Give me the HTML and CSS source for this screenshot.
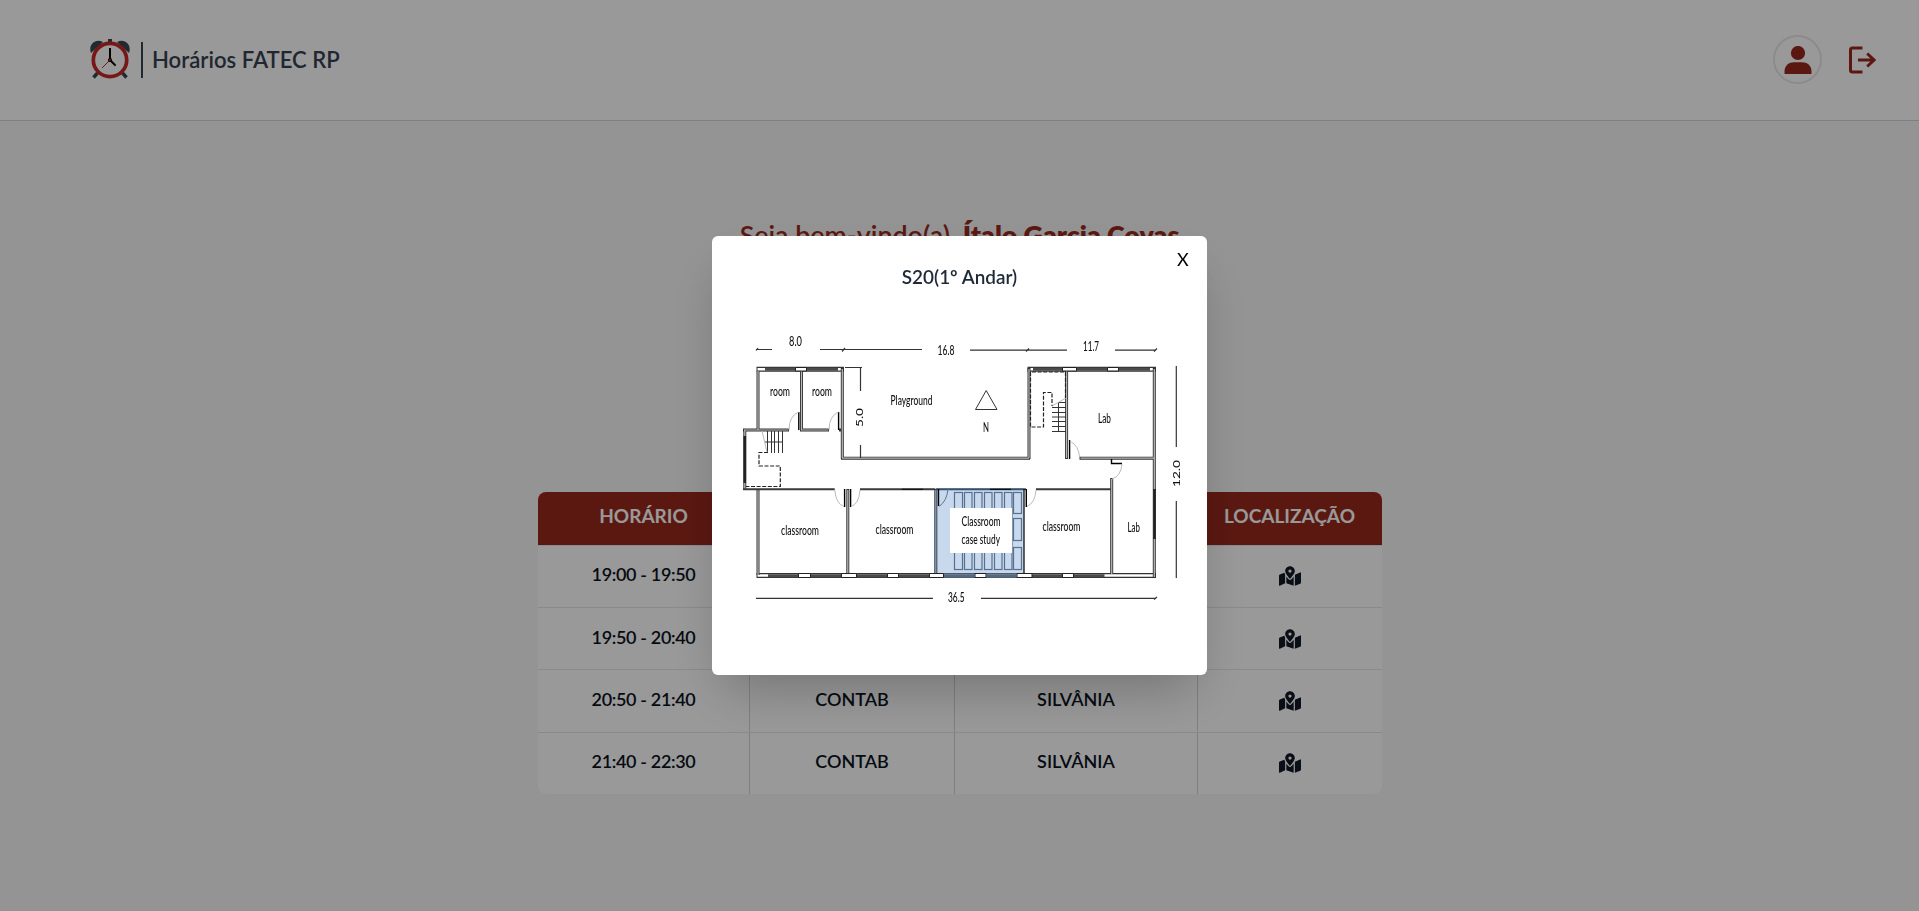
FILE: index.html
```html
<!DOCTYPE html>
<html lang="pt-BR">
<head>
<meta charset="utf-8">
<title>Horários FATEC RP</title>
<link rel="stylesheet" href="styles.css">
</head>
<body>
<svg class="defs" aria-hidden="true">
  <symbol id="map" viewBox="0 0 576 512"><path d="M288 0c-69.59 0-126 56.41-126 126 0 56.26 82.35 158.8 113.9 196.02 6.39 7.54 17.82 7.54 24.2 0C331.65 284.8 414 182.26 414 126 414 56.41 357.59 0 288 0zm0 168c-23.2 0-42-18.8-42-42s18.8-42 42-42 42 18.8 42 42-18.8 42-42 42zM20.12 215.95A32.006 32.006 0 0 0 0 245.66v250.32c0 11.32 11.43 19.06 21.94 14.86L160 448V214.92c-8.84-15.98-16.07-31.54-21.25-46.42L20.12 215.95zM288 359.67c-14.07 0-27.38-6.18-36.51-16.96-19.66-23.2-40.57-49.62-59.49-76.72v182l192 64V266c-18.92 27.09-39.82 53.52-59.49 76.72-9.13 10.77-22.44 16.95-36.51 16.95zm266.06-198.51L416 224v288l139.88-55.95A31.996 31.996 0 0 0 576 426.34V176.02c0-11.32-11.43-19.06-21.94-14.86z"/></symbol>
</svg>

<header class="topbar">
  <div class="brand">
    <svg class="clock" width="42" height="42" viewBox="0 0 42 42">
      <path d="M8.500 35l-4 4.500M33.500 35l4 4.500" stroke="#37474f" stroke-width="3.400"/>
      <rect x="19" y="1" width="4" height="4" fill="#37474f"/>
      <path d="M2 15C-1 7 6 0 14 4zM40 15C43 7 36 0 28 4z" fill="#37474f"/>
      <circle cx="21" cy="22" r="16.700" fill="#fff" stroke="#c62828" stroke-width="3.700"/>
      <path d="M21 22V10M21 22l5.600 5.600" stroke="#000" stroke-width="2" fill="none"/>
      <path d="M21 22l-8 8" stroke="#c62828" stroke-width="1"/>
      <circle cx="21" cy="22" r="2" fill="#000"/><circle cx="21" cy="22" r="1" fill="#c62828"/>
    </svg>
    <span class="bar"></span>
    <span class="name">Horários FATEC RP</span>
  </div>
  <nav class="actions">
    <span class="avatar">
      <svg width="28" height="28" viewBox="0 0 28 28" fill="#97291d"><circle cx="14" cy="7" r="7.100"/><path d="M.5 28v-2.500C.5 19.500 5 16.300 10 16.300h8c5 0 9.500 3.200 9.500 9.200V28z"/></svg>
    </span>
    <svg width="28" height="28" viewBox="0 0 28 28" fill="none" stroke="#97291d" stroke-width="3"><path d="M14.500 2H4.500Q2.500 2 2.500 4v20q0 2 2 2h10" /><path d="M10 14h16M19.200 7.500l6.800 6.500-6.800 6.500"/></svg>
  </nav>
</header>

<main class="content">
  <h1 class="welcome">Seja bem-vindo(a), <b>Ítalo Garcia Covas</b></h1>
  <div class="schedule">
    <div class="row head"><span>HORÁRIO</span><span></span><span></span><span>LOCALIZAÇÃO</span></div>
    <div class="row"><span class="time">19:00 - 19:50</span><span></span><span></span><span class="place"><svg class="map"><use href="#map"/></svg></span></div>
    <div class="row"><span class="time">19:50 - 20:40</span><span></span><span></span><span class="place"><svg class="map"><use href="#map"/></svg></span></div>
    <div class="row"><span class="time">20:50 - 21:40</span><span>CONTAB</span><span>SILVÂNIA</span><span class="place"><svg class="map"><use href="#map"/></svg></span></div>
    <div class="row"><span class="time">21:40 - 22:30</span><span>CONTAB</span><span>SILVÂNIA</span><span class="place"><svg class="map"><use href="#map"/></svg></span></div>
  </div>
</main>

<div class="overlay">
  <section class="modal">
    <button class="close">X</button>
    <h2 class="title">S20(1º Andar)</h2>
    <svg class="plan" width="448" height="300" viewBox="736 320 448 300">
      <!-- highlighted classroom -->
      <rect x="935" y="488" width="89" height="89" fill="#c8d9ee"/>
      <g class="desk">
        <rect x="954.500" y="492.500" width="8" height="77"/><rect x="964.500" y="492.500" width="7.500" height="77"/><rect x="974.500" y="492.500" width="7.500" height="77"/><rect x="984.500" y="492.500" width="7.500" height="77"/><rect x="994.500" y="492.500" width="7.500" height="77"/><rect x="1004.500" y="492.500" width="7.500" height="77"/>
        <rect x="1013.500" y="492.500" width="8" height="21"/><rect x="1013.500" y="518.500" width="8" height="22"/><rect x="1013.500" y="547.500" width="8" height="22"/>
      </g>
      <rect x="950" y="508" width="62" height="45" fill="#fff"/>

      <!-- walls -->
      <path class="wall" d="M756.500 369.300H844M1027.500 369.300H1156M756.500 575.500H1156"/>
      <path class="wall-in" d="M757.500 369.300H843M1028.500 369.300H1155M757.500 575.500H1155"/>
      <path class="edge" d="M758 371V430M801.500 371V430M842.300 368V459M841 458.200H1030M1029 368V459M1066.600 371V459M1079.500 458.200H1154M1154.300 368V577M743 430H789M800 430H829M839 430H842M744.800 429V490M758 489V575M847.800 489V574M935.800 489V574M1111.700 478V574"/>
      <path class="edge-in" d="M758 371V430M801.500 371V430M842.300 369V458M842 458.200H1029M1029 369V458M1066.600 371V458M1080.500 458.200H1154M1154.300 369V577M744 430H788M801 430H828M744.800 430V489M758 490V575M847.800 490V574M1111.700 479V574"/>
      <path d="M935.800 490V574" stroke="#7d97b8" stroke-width="1.500"/>
      <path class="corr" d="M743 489.300H834.700M860 489.300H935M1036 489.300H1111"/>
      <path d="M936 489.300H1026" stroke="#35506f" stroke-width="2"/>
      <path d="M902 489.300H923M990 489.300H1011M1024 489V574" stroke="#111" stroke-width="1.300"/>
      <!-- windows -->
      <path class="window" d="M765 369.300H795M807 369.300H838M1033 369.300H1062M1077 369.300H1107M1119 369.300H1150M768 575.800H798M811 575.800H841M857 575.800H887M899 575.800H929M944 575.800H974.500M986.500 575.800H1016.500M1032 575.800H1062M1074 575.800H1104.500"/>
      <path d="M744.800 436V483M1154.500 489V539" stroke="#222" stroke-width="2.500"/>
      <path d="M935 575.500H1024" stroke="#6f98ce" stroke-opacity=".4" stroke-width="5"/>
      <!-- pillars between windows -->
      <path class="pillar" d="M795.500 367.500h11v3.500h-11zM1062.500 367.500h14v3.500h-14zM1107.500 367.500h11v3.500h-11zM798.500 573.500h12v4h-12zM841.500 573.500h15v4h-15zM887.500 573.500h11v4h-11zM929.500 573.500h14v4h-14zM975 573.500h11v4h-11zM1017 573.500h15v4h-15zM1062.500 573.500h11v4h-11z"/>
      <!-- doors -->
      <path class="post" d="M798.800 412V430M838.600 412V430M844.600 489V507M850.600 489V507M938.500 489V506M1026.300 489V507M1069.600 440V459M1111.500 459V463.500H1122"/>
      <path class="arc" d="M798.800 412Q789 416 789 430M838.600 412Q829 416 829 430M834.700 490Q836 504 844 506.500M860 490Q859 504 851 506.500M1036 490Q1035 503 1027 506.500M1070 441Q1079 446 1079.500 457M1122 464Q1121 476 1112 479"/>
      <path d="M948 489Q947 501 939 506.500" stroke="#5b7391" fill="none"/>
      <!-- stairs -->
      <path class="thin" d="M767.500 431V453M771.500 431V453M774.500 431V453M778.500 431V453M782.500 431V453M765 442H783M1058 402.500H1066M1052 407.500H1066M1052 412.500H1066M1052 417H1066M1052 421.500H1066M1052 426.500H1066M1052 431.500H1066M1058.500 402V432"/>
      <path class="arc" d="M762 431L767 452M1052 406L1066 398"/>
      <path class="dash" d="M768 452.500H759V466H780.300V486.500H746M1030.500 372V427H1043.500V392.500H1052V406M1032 372H1065.500V398"/>
      <!-- dimension lines -->
      <path class="dim" d="M756 349.500H772M820 349.500H922M970 350.200H1067M1115 350.200H1156M756 598.300H933M981 598.300H1156M1176.300 366V447M1176.300 501V578M860.500 368V391M860.500 445V458M845 367.500H862M756 350.500L758 348M842 351.500L845 348M1026 351.500L1029 348.500M1154 351.500L1157 348.500M1154 599.500L1157 597"/>
      <path class="thin" d="M986.200 390.500L975.500 409.500H997Z"/>
      <!-- labels -->
      <g class="label">
        <text x="789" y="346" textLength="13">8.0</text>
        <text x="937.500" y="354.500" textLength="17">16.8</text>
        <text x="1083" y="351" textLength="16">11.7</text>
        <text x="948" y="602" textLength="16.500">36.5</text>
        <text x="770" y="396" textLength="20">room</text>
        <text x="812" y="396" textLength="20">room</text>
        <text x="890.500" y="405" textLength="42">Playground</text>
        <text x="983" y="432.300" textLength="6">N</text>
        <text x="1098" y="422.500" textLength="13">Lab</text>
        <text x="1127.500" y="531.500" textLength="12.500">Lab</text>
        <text x="781" y="535" textLength="38">classroom</text>
        <text x="875.500" y="534.300" textLength="38">classroom</text>
        <text x="1042.500" y="531.200" textLength="38">classroom</text>
        <text x="961.500" y="526" textLength="39">Classroom</text>
        <text x="961.500" y="544.300" textLength="38.500">case study</text>
        <text class="side" transform="translate(862.500 427) rotate(-90)" textLength="19">5.0</text>
        <text class="side" transform="translate(1179.500 487) rotate(-90)" textLength="27">12.0</text>
      </g>
    </svg>
  </section>
</div>
<script src="labels.js"></script>
</body>
</html>
```
FILE: labels.js
```js
// Squeeze the plan labels horizontally into their allotted lengths.
document.querySelectorAll('.label text').forEach(function (t) {
  t.setAttribute('lengthAdjust', 'spacingAndGlyphs');
});
```
FILE: styles.css
```css
* { box-sizing: border-box; }
body { margin: 0; height: 911px; overflow: hidden; background: #f7f7f7; font-family: Lato, sans-serif; color: #111827; }
.defs { display: none; }
.topbar { height: 121px; padding: 0 43px 0 89px; background: #fff; border-bottom: 1px solid #d1d5db; display: flex; align-items: center; justify-content: space-between; }
.brand { display: flex; align-items: center; padding-bottom: 1px; }
.clock { margin: -2px 10px 0 0; }
.bar { width: 2px; height: 36px; background: #374151; margin-right: 9px; }
.name { font-size: 22.1px; font-weight: 600; color: #374151; padding-bottom: 1px; }
.actions { display: flex; align-items: center; gap: 26px; padding-bottom: 1px; }
.avatar { width: 49px; height: 49px; border: 2px solid #e8e8e8; border-radius: 50%; display: flex; align-items: center; justify-content: center; }
.content { display: flex; flex-direction: column; align-items: center; padding-top: 96px; }
.welcome { margin: 0 0 239px; font-size: 26.8px; line-height: 36px; font-weight: 600; color: #97291d; }
.welcome b { font-weight: 800; }
.schedule { width: 844px; border-radius: 8px; overflow: hidden; }
.row { display: grid; grid-template-columns: 212px 205px 243px 184px; height: 62.4px; background: #fff; border-top: 1px solid #e5e7eb; font-size: 18px; font-weight: 600; color: #0b1220; }
.row span { display: flex; align-items: center; justify-content: center; padding: 0 0 4px 1px; border-right: 1px solid #d4d4d6; }
.row span:last-child { border-right: 0; }
.row .time { letter-spacing: -0.35px; }
.row .place { padding: 0; }
.row.head { height: 52.6px; background: #97291d; border: 0; color: #fff; font-size: 19px; font-weight: 700; }
.row.head span { border: 0; padding: 0 0 5px; }
.map { width: 22px; height: 20px; fill: #111827; }
.overlay { position: fixed; inset: 0; background: rgba(0,0,0,.4); display: flex; align-items: center; justify-content: center; }
.modal { position: relative; width: 495.4px; height: 439.6px; padding: 27px 23.5px; background: #fff; border-radius: 6px; box-shadow: 0 25px 50px -12px rgba(0,0,0,.25); display: flex; flex-direction: column; align-items: center; }
.close { position: absolute; top: 13px; right: 18.5px; padding: 0; border: 0; background: none; font: 18px/21px Lato, sans-serif; color: #000; }
.title { margin: 1px 0 30px; font-size: 18.9px; line-height: 26px; font-weight: 600; color: #1f2937; }
.plan { flex: none; margin-left: 1px; }
.plan path { fill: none; }
.desk { fill: #c8d9ee; stroke: #58708f; stroke-width: 1.2; }
.wall { stroke: #333; stroke-width: 5; }
.wall-in { stroke: #fff; stroke-width: 2.6; }
.edge { stroke: #333; stroke-width: 3; }
.edge-in { stroke: #bbb; stroke-width: 1.2; }
.corr { stroke: #3a3a3a; stroke-width: 2; }
.window { stroke: #4a4a4a; stroke-width: 3; }
.plan .pillar { fill: #fff; stroke: #222; stroke-width: 1; }
.post { stroke: #000; stroke-width: 1.4; }
.arc { stroke: #bbb; stroke-width: 1; }
.thin { stroke: #333; stroke-width: 1; }
.dash { stroke: #222; stroke-width: 1.2; stroke-dasharray: 4 1.6; }
.dim { stroke: #333; stroke-width: 1.2; }
.label { font-size: 13.8px; font-weight: 500; fill: #111; }
.label .side { font-size: 10px; }
```
